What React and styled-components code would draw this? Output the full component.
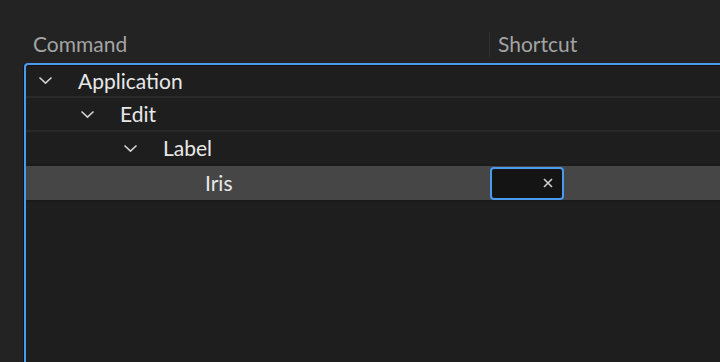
import React from "react";
import styled, { createGlobalStyle } from "styled-components";

const Global = createGlobalStyle`
  html, body { margin: 0; padding: 0; background: #232323; }
  body { font-family: Lato, "Open Sans", sans-serif; overflow: hidden; }
`;

const Page = styled.div`
  width: 720px;
  height: 362px;
  background: #232323;
  display: flex;
  flex-direction: column;
  padding-left: 24px;
  box-sizing: border-box;
  overflow: hidden;
`;

const Header = styled.div`
  display: flex;
  align-items: flex-end;
  height: 63px;
  padding-bottom: 7px;
  box-sizing: border-box;
`;

const HeadCell = styled.div`
  flex: 0 0 ${(p) => p.$w}px;
  padding-left: 9px;
  box-sizing: border-box;
  color: #a3a3a3;
  font-size: 21px;
  height: 24px;
  line-height: 24px;
  position: relative;
  ${(p) =>
    p.$divider
      ? `&::before { content: ""; position: absolute; left: 0; top: 0; height: 25px; width: 1px; background: #2f2f2f; }`
      : ""}
`;

const Tree = styled.div`
  flex: 1;
  width: 710px;
  border: 2px solid #4a9af0;
  border-right: none;
  border-bottom: none;
  border-top-left-radius: 4px;
  background: #1e1e1e;
  box-shadow: inset 0 1px 0 #121212, -1px 0 0 #151515;
  display: flex;
  flex-direction: column;
`;

const Row = styled.div`
  display: flex;
  align-items: center;
  height: ${(p) => (p.$selected ? 34 : 32)}px;
  border-bottom: 2px solid ${(p) => (p.$selected ? "#1a1a1a" : "#292929")};
  background: ${(p) => (p.$selected ? "#464646" : "transparent")};
  box-shadow: ${(p) => (p.$selected ? "0 -2px 0 #1a1a1a" : "none")};
  &:first-child { height: 31px; }
`;

const NameCell = styled.div`
  width: 464px;
  flex: 0 0 464px;
  display: flex;
  align-items: center;
  padding-left: ${(p) => Math.round(12 + p.$level * 42.4)}px;
  box-sizing: border-box;
  color: #e8e8e8;
  font-size: 21px;
`;

const Chevron = styled.span`
  width: 40px;
  display: inline-flex;
  align-items: center;
  color: #d2d2d2;
`;

const Label = styled.span`
  line-height: 24px;
`;

const ShortcutCell = styled.div`
  display: flex;
  align-items: center;
`;

const KeyInput = styled.div`
  width: 74px;
  height: 33px;
  box-sizing: border-box;
  border: 2px solid #4a9af0;
  border-radius: 4px;
  background: #141414;
  display: flex;
  align-items: center;
  justify-content: flex-end;
  padding-right: 9px;
  color: #cacaca;
`;

const ChevronIcon = () => (
  <svg width="15" height="9" viewBox="0 0 15 9">
    <path d="M1.5 1.5 L7.5 7.2 L13.5 1.5" fill="none" stroke="currentColor" strokeWidth="1.6" />
  </svg>
);

const CloseIcon = () => (
  <svg width="10" height="10" viewBox="0 0 10 10">
    <path d="M1 1 L9 9 M9 1 L1 9" stroke="currentColor" strokeWidth="1.7" />
  </svg>
);

const rows = [
  { name: "Application", level: 0 },
  { name: "Edit", level: 1 },
  { name: "Label", level: 2 },
  { name: "Iris", level: 3, leaf: true, selected: true },
];

export default function App() {
  return (
    <Page>
      <Global />
      <Header>
        <HeadCell $w={465}>Command</HeadCell>
        <HeadCell $w={200} $divider>Shortcut</HeadCell>
      </Header>
      <Tree>
        {rows.map((r) => (
          <Row key={r.name} $selected={r.selected}>
            <NameCell $level={r.level}>
              <Chevron>{r.leaf ? null : <ChevronIcon />}</Chevron>
              <Label>{r.name}</Label>
            </NameCell>
            {r.selected && (
              <ShortcutCell>
                <KeyInput>
                  <CloseIcon />
                </KeyInput>
              </ShortcutCell>
            )}
          </Row>
        ))}
      </Tree>
    </Page>
  );
}
